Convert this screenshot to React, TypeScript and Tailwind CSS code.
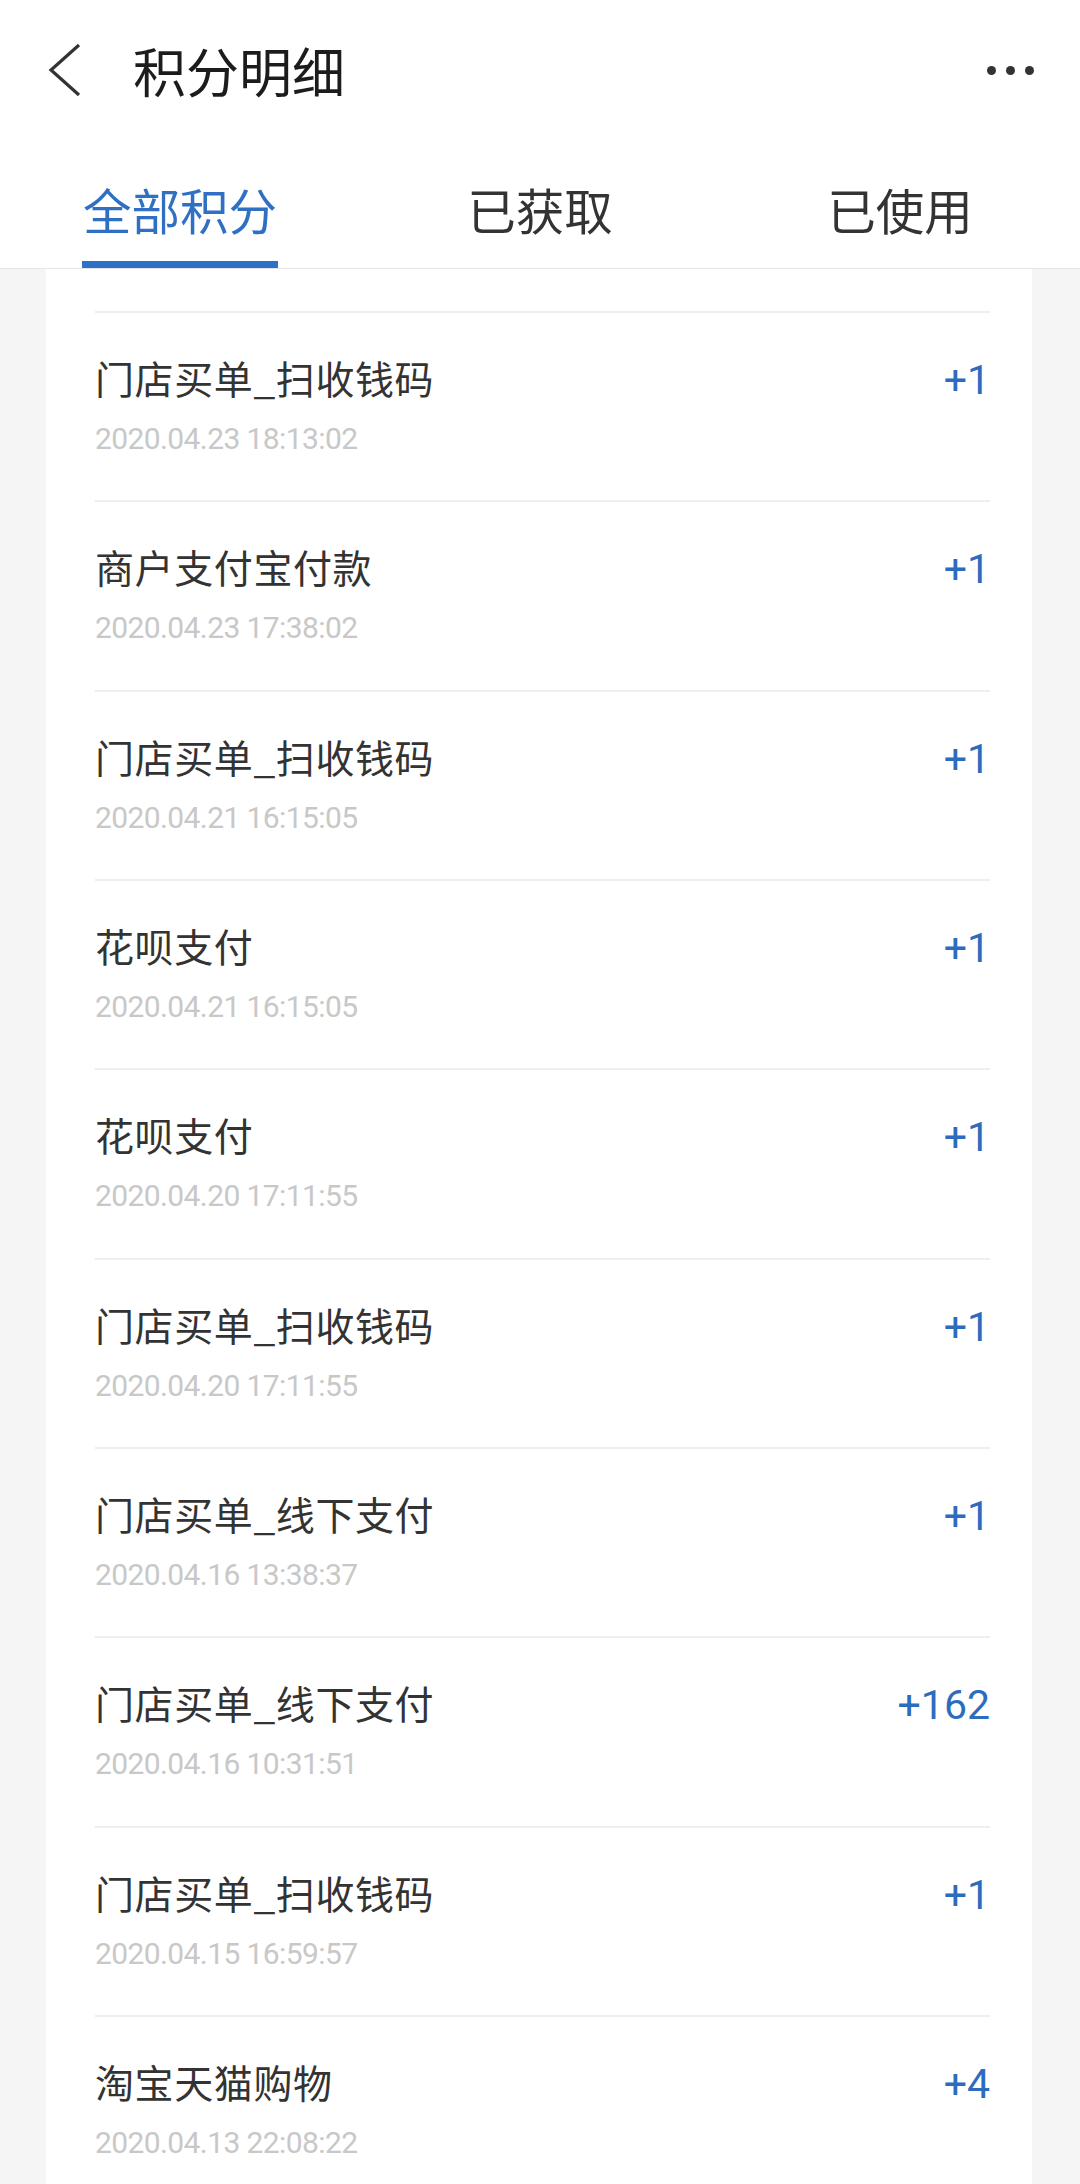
import React from "react";

const rows = [
  { t: "门店买单_扫收钱码", d: "2020.04.23 18:13:02", a: "+1" },
  { t: "商户支付宝付款", d: "2020.04.23 17:38:02", a: "+1" },
  { t: "门店买单_扫收钱码", d: "2020.04.21 16:15:05", a: "+1" },
  { t: "花呗支付", d: "2020.04.21 16:15:05", a: "+1" },
  { t: "花呗支付", d: "2020.04.20 17:11:55", a: "+1" },
  { t: "门店买单_扫收钱码", d: "2020.04.20 17:11:55", a: "+1" },
  { t: "门店买单_线下支付", d: "2020.04.16 13:38:37", a: "+1" },
  { t: "门店买单_线下支付", d: "2020.04.16 10:31:51", a: "+162" },
  { t: "门店买单_扫收钱码", d: "2020.04.15 16:59:57", a: "+1" },
  { t: "淘宝天猫购物", d: "2020.04.13 22:08:22", a: "+4" },
];

const cjk = "font-['Noto_Sans_CJK_SC',sans-serif]";
const num = "font-['Roboto','Noto_Sans_CJK_SC',sans-serif]";

export default function App() {
  return (
    <div className="w-[1080px] h-[2184px] overflow-hidden bg-[#f5f5f5]">
      <header className="bg-white border-b border-[#e6e6e6]">
        <div className="h-[140px] flex items-center pl-[48px] pr-[46px]">
          <svg width="34" height="54" viewBox="0 0 34 54" className="shrink-0">
            <polyline points="31,2 3,27 31,52" fill="none" stroke="#333" strokeWidth="3.2" strokeLinejoin="miter" />
          </svg>
          <h1 className={`${cjk} ml-[51px] text-[53px] leading-none text-[#1c1c1c] font-normal`}>积分明细</h1>
          <div className="ml-auto flex items-center gap-[10px]">
            <span className="w-[9px] h-[9px] rounded-full bg-[#333]" />
            <span className="w-[9px] h-[9px] rounded-full bg-[#333]" />
            <span className="w-[9px] h-[9px] rounded-full bg-[#333]" />
          </div>
        </div>
        <div className="grid grid-cols-3 h-[128px]">
          <div className="flex flex-col items-center pt-[45px]">
            <span className={`${cjk} text-[48.5px] leading-none text-[#2f70c3]`}>全部积分</span>
            <span className="mt-[27.5px] w-[196px] h-[7px] bg-[#2e6fc8]" />
          </div>
          <div className="flex flex-col items-center pt-[45px]">
            <span className={`${cjk} text-[48.5px] leading-none text-[#333]`}>已获取</span>
          </div>
          <div className="flex flex-col items-center pt-[45px]">
            <span className={`${cjk} text-[48.5px] leading-none text-[#333]`}>已使用</span>
          </div>
        </div>
      </header>
      <main className="pl-[46px] pr-[48px]">
        <div className="bg-white pl-[49px] pr-[42px]">
          <div className="h-[42px]" />
          {rows.map((r, i) => (
            <div key={i} className="h-[189.33px] border-t-2 border-[#eeeeee] pt-[45px]">
              <div className="flex items-start justify-between">
                <div className="flex flex-col">
                  <span className={`${cjk} text-[39px] leading-none tracking-[0.6px] text-[#333]`}>{r.t}</span>
                  <span className={`${num} mt-[27px] text-[30px] leading-none tracking-[-0.6px] text-[#c8c8c8]`}>{r.d}</span>
                </div>
                <span className={`${num} mt-[2px] text-[41px] leading-none text-[#2d6cbd]`}>{r.a}</span>
              </div>
            </div>
          ))}
        </div>
      </main>
    </div>
  );
}
